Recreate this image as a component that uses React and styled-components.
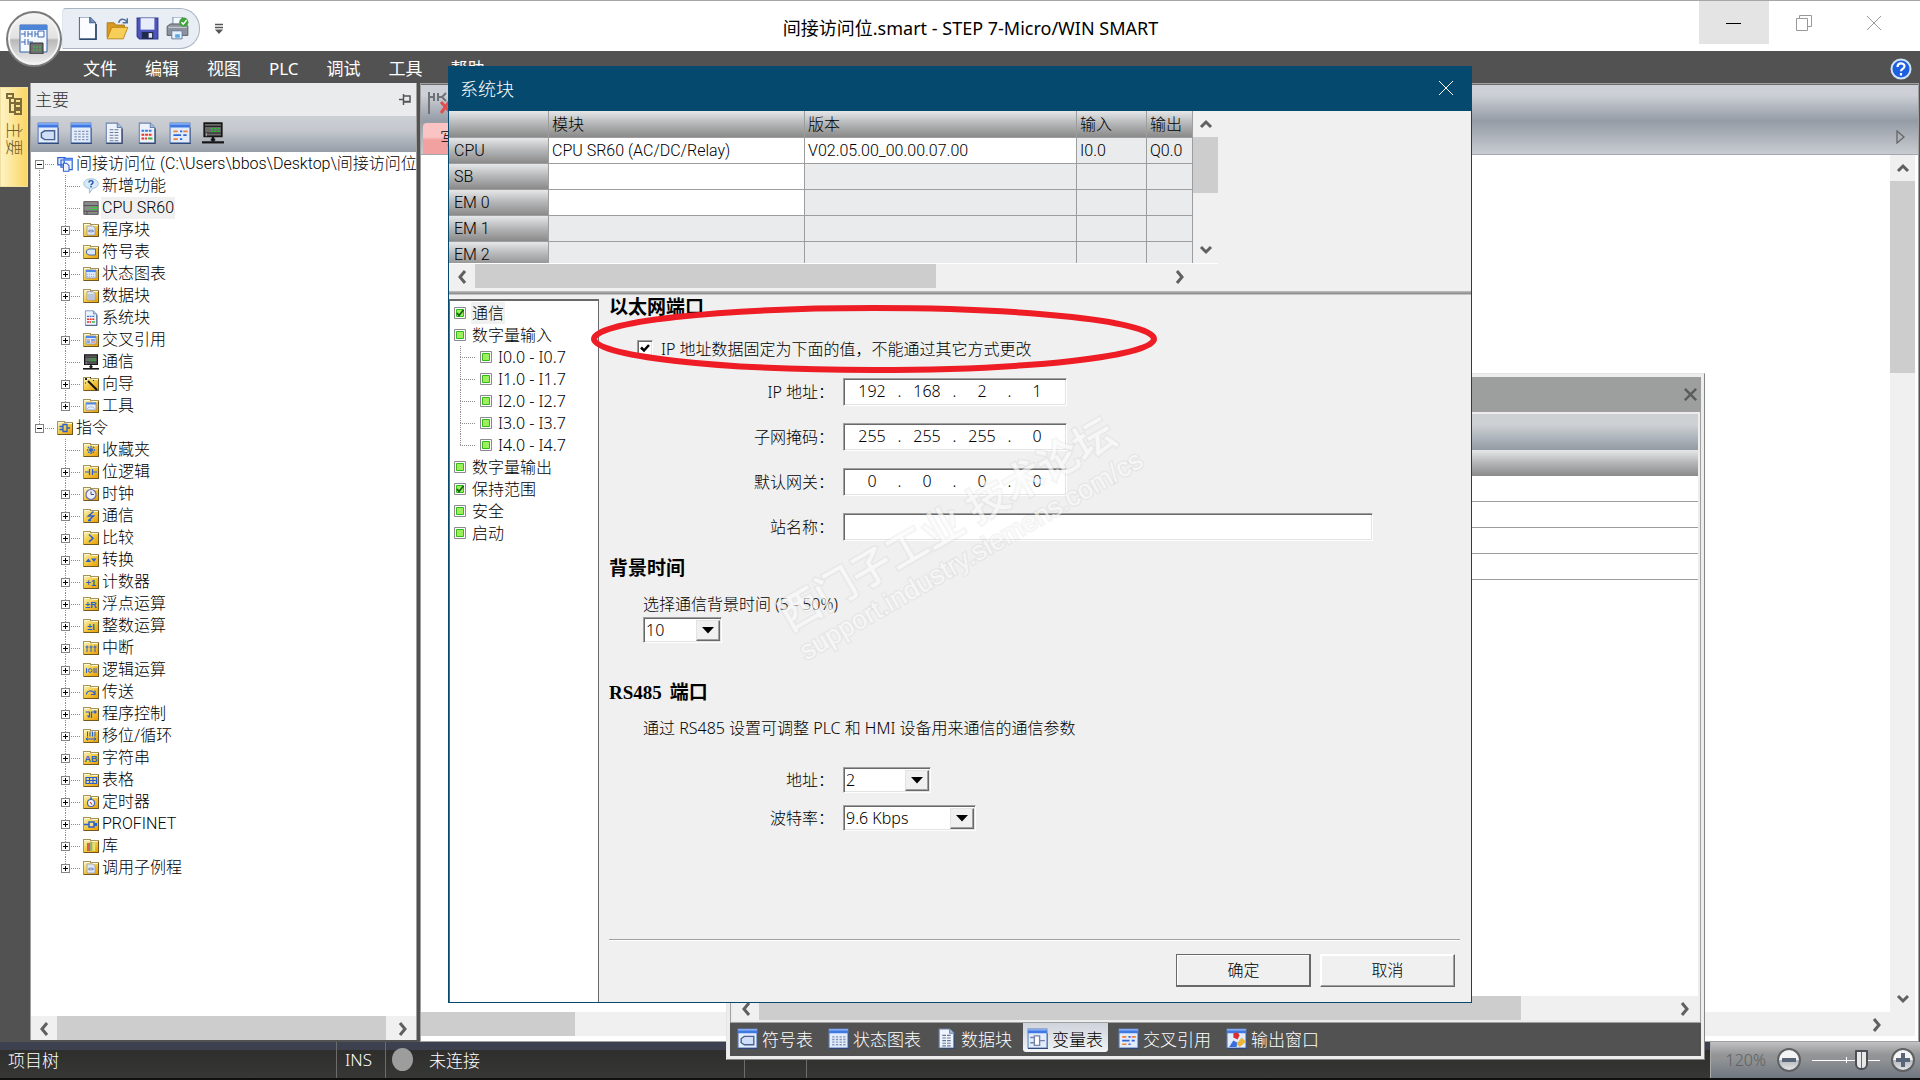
import React, { useState } from "react";
import styled, { createGlobalStyle, css } from "styled-components";

const projectItems = [
    { text: "新增功能", icon: "help", leaf: true },
    { text: "CPU SR60", icon: "cpu", leaf: true, active: true },
    { text: "程序块", icon: "f-program" },
    { text: "符号表", icon: "f-tag" },
    { text: "状态图表", icon: "f-chart" },
    { text: "数据块", icon: "f-data" },
    { text: "系统块", icon: "docColor", leaf: true },
    { text: "交叉引用", icon: "f-cross" },
    { text: "通信", icon: "plc", leaf: true },
    { text: "向导", icon: "f-wand" },
    { text: "工具", icon: "f-tools" },
];

const instructionItems = [
    { text: "收藏夹", icon: "f-star", leaf: true },
    { text: "位逻辑", icon: "f-contact" },
    { text: "时钟", icon: "f-clock" },
    { text: "通信", icon: "f-bolt" },
    { text: "比较", icon: "f-compare" },
    { text: "转换", icon: "f-convert" },
    { text: "计数器", icon: "f-counter" },
    { text: "浮点运算", icon: "f-real" },
    { text: "整数运算", icon: "f-int" },
    { text: "中断", icon: "f-interrupt" },
    { text: "逻辑运算", icon: "f-logic" },
    { text: "传送", icon: "f-move" },
    { text: "程序控制", icon: "f-control" },
    { text: "移位/循环", icon: "f-shift" },
    { text: "字符串", icon: "f-string" },
    { text: "表格", icon: "f-table" },
    { text: "定时器", icon: "f-timer" },
    { text: "PROFINET", icon: "f-profinet" },
    { text: "库", icon: "f-library" },
    { text: "调用子例程", icon: "f-program" },
];

const blockItems = [
    { text: "通信", checked: true, active: true },
    { text: "数字量输入" },
    { text: "I0.0 - I0.7", child: true },
    { text: "I1.0 - I1.7", child: true },
    { text: "I2.0 - I2.7", child: true },
    { text: "I3.0 - I3.7", child: true },
    { text: "I4.0 - I4.7", child: true, last: true },
    { text: "数字量输出" },
    { text: "保持范围", checked: true },
    { text: "安全" },
    { text: "启动" },
];

const modules = [
    { slot: "CPU", module: "CPU SR60 (AC/DC/Relay)", version: "V02.05.00_00.00.07.00", input: "I0.0", output: "Q0.0" },
    { slot: "SB", module: "" },
    { slot: "EM 0", module: "" },
    { slot: "EM 1" },
    { slot: "EM 2" },
];

const addresses = [
    { id: "ip", label: "IP 地址：", value: ["192", "168", "2", "1"] },
    { id: "mask", label: "子网掩码：", value: ["255", "255", "255", "0"] },
    { id: "gateway", label: "默认网关：", value: ["0", "0", "0", "0"] },
];

const dockTabs = [
    { text: "符号表", icon: "tag" },
    { text: "状态图表", icon: "grid" },
    { text: "数据块", icon: "doc" },
    { text: "变量表", icon: "variable", active: true },
    { text: "交叉引用", icon: "cross" },
    { text: "输出窗口", icon: "output" },
];

/* ---------- icons ---------- */

const BLUE = "#2a5fd0";

const folderMarks = {
    "f-program": (
        <>
            <path d="M4 4h6l2 2v7H4z" fill="#dfe7f6" stroke="#8a93b0" strokeWidth=".7" />
            <path d="M5 9h2M7 7.500v3M9 7.500v3M9 9h2" stroke="#6d7da8" />
        </>
    ),
    "f-tag": <path d="M6 5h6.500v6H6L3.500 9.500v-3z" fill="#dce8fb" stroke="#4a6cb0" />,
    "f-chart": (
        <>
            <path d="M3 4h10v8H3z" fill="#dce8fb" stroke="#7f93bf" strokeWidth=".8" />
            <path d="M3 4h10v2H3z" fill="#4f86e8" />
            <path d="M4 8.500h8M4 10.500h8" stroke="#a4b8dd" strokeDasharray="1 1" />
        </>
    ),
    "f-data": (
        <>
            <path d="M4 3.500h6l2 2V12H4z" fill="#dce2ec" stroke="#8a93b0" strokeWidth=".7" />
            <path d="M6 6v5M8 6v5M10 6v5" stroke="#9aa8c4" />
        </>
    ),
    "f-cross": (
        <>
            <path d="M3 4h10v8H3z" fill="#dce8fb" stroke="#7f93bf" strokeWidth=".8" />
            <path d="M3 4h10v2H3z" fill="#4f86e8" />
            <path d="M4 8h3M8 10h4" stroke="#f07030" />
            <path d="M8 8h4M4 10h3" stroke={BLUE} />
        </>
    ),
    "f-wand": (
        <>
            <path d="M5 5l9 9" stroke="#111" strokeWidth="2" />
            <path d="M2 2l2 2M4 2L2 4M7 1l1 1M10 4l1 1M11 4l-1 1M2 7h1" stroke="#222" />
        </>
    ),
    "f-tools": (
        <>
            <path d="M3 5h10v7H3z" fill="#e7effc" stroke="#7f93bf" strokeWidth=".8" />
            <path d="M3 4.500h10v2H3z" fill="#4f86e8" />
            <path d="M3 12l3-3h4l3 3" stroke="#b3bfd8" fill="none" />
        </>
    ),
    "f-root": <path d="M2.500 6.500H6M2.500 9.500H6M6 4.500h4v7H6zM10 8h3" stroke={BLUE} strokeWidth="1.300" fill="none" />,
    "f-star": <path d="M8 4v8M4 8h8M5 5l6 6M11 5l-6 6" stroke={BLUE} strokeWidth="1.500" strokeDasharray="1.500 .7" />,
    "f-contact": <path d="M2 8h4.500M9.500 8H14M6.500 5v6M9.500 5v6" stroke={BLUE} strokeWidth="1.200" />,
    "f-clock": (
        <>
            <circle cx="8" cy="8.500" r="5" fill="#eef0fb" stroke="#6a6fae" strokeWidth="1.200" />
            <path d="M8 5.500v3h3" stroke="#444a80" fill="none" />
        </>
    ),
    "f-bolt": <path d="M10.500 3.500l-5 4.500h5l-5 4.500M5 12.500h3" stroke={BLUE} strokeWidth="1.500" fill="none" />,
    "f-compare": <path d="M6 4.500l4 3.700-4 3.700" stroke={BLUE} strokeWidth="1.500" fill="none" />,
    "f-convert": <path d="M2.500 10L5.500 6.500 8 10zM8 6.500h5.500L11 10z" fill={BLUE} />,
    "f-interrupt": <path d="M4 12V5.500M8 12V5.500M12 12V5.500M2.500 7h3M6.500 7h3M10.500 7h3" stroke={BLUE} />,
    "f-logic": (
        <>
            <path d="M3.500 6v5M11 6v5M13 6v5" stroke={BLUE} />
            <circle cx="7.200" cy="8.500" r="1.800" stroke={BLUE} fill="none" />
        </>
    ),
    "f-move": <path d="M3.500 10.500c0-4 6-5 8-1M12 6.500v4H8" stroke={BLUE} strokeWidth="1.200" fill="none" />,
    "f-control": <path d="M2.500 6h4v5M4.500 9.500l2 2M8.500 12V6H13M11.500 4.500L13 6l-1.500 1.500" stroke={BLUE} strokeWidth="1.200" fill="none" />,
    "f-shift": <path d="M4.500 3.500v5M7 3.500v5M9.500 3.500v5M12 3.500v5M3 11h10M5 9.500L3 11l2 1.500M11 9.500l2 1.500-2 1.500" stroke={BLUE} fill="none" />,
    "f-table": <path d="M3 5.500h10.500v6H3zM3 8.500h10.500M6.500 5.500v6M10 5.500v6" stroke={BLUE} strokeWidth="1.200" fill="#e9d98c" />,
    "f-timer": (
        <>
            <circle cx="8" cy="9" r="3.500" fill="#fff" stroke="#3f66c8" strokeWidth="1.200" />
            <path d="M8 3.500v2" stroke="#3f66c8" strokeWidth="2" />
            <path d="M7 8l2 2.500" stroke="#e02020" strokeWidth="1.200" />
        </>
    ),
    "f-profinet": (
        <>
            <path d="M1 8.500h5M6 6h5v5H6z" stroke={BLUE} strokeWidth="1.500" fill="#f6e08a" />
            <path d="M11 7h3v3h-3z" fill={BLUE} />
        </>
    ),
    "f-library": (
        <>
            <path d="M4 5h3v8H4z" fill="#d8604e" />
            <path d="M7 4h2.500v9H7z" fill="#8fb47c" />
            <path d="M9.500 5H12v8H9.500z" fill="#e7e36c" />
        </>
    ),
};

const folderLetters = {
    "f-counter": "+1",
    "f-real": "±R",
    "f-int": "±I",
    "f-string": "AB",
};

const FolderIcon = ({ kind }) => (
    <svg width="16" height="16" viewBox="0 0 16 16" aria-hidden="true">
        <defs>
            <linearGradient id="folder" x1="0" y1="0" x2="1" y2="1">
                <stop offset="0" stopColor="#fbf0b4" />
                <stop offset=".4" stopColor="#f3d050" />
                <stop offset="1" stopColor="#ec9d04" />
            </linearGradient>
        </defs>
        <path d="M0 1h8v1h8v13H0z" fill="#a8935a" />
        <path d="M1 3h14v11H1z" fill="url(#folder)" />
        <path d="M1 2h6v1H1zM9 3h6v1H9z" fill="#fdf7d2" />
        <path d="M15 3h1v12H1v-1h14z" fill="#70581e" />
        {folderMarks[kind]}
        {folderLetters[kind] && (
            <text x="8" y="12" fontSize="9" textAnchor="middle" fill={BLUE} fontFamily="Liberation Sans, sans-serif" fontWeight="bold">
                {folderLetters[kind]}
            </text>
        )}
    </svg>
);

const windowBase = (
    <>
        <path d="M1 1h18v18H1z" fill="#e3ecfb" stroke="#5f7fb8" />
        <path d="M1 1h18v4H1z" fill="#3f78e0" />
        <path d="M1 1h18v1.500H1z" fill="#86aef5" />
        <path d="M1 19.500h19V5" stroke="#2f4a78" fill="none" />
    </>
);

const docBase = (
    <>
        <path d="M3 1h10l4 4v14H3z" fill="#eef3fb" stroke="#6b83ad" />
        <path d="M13 1v4h4" fill="#a9bfe2" stroke="#6b83ad" />
        <path d="M3 19.500h14.500V6" stroke="#38496b" fill="none" />
    </>
);

const drawings = {
    tag: (
        <>
            {windowBase}
            <path d="M7 8h9v8H7l-3-2v-4z" fill="#cfdff8" stroke="#4a6090" strokeWidth="1.300" />
        </>
    ),
    grid: (
        <>
            {windowBase}
            <path d="M4 8.500h13M4 11h13M4 13.500h13M4 16h13" stroke="#8494b8" strokeWidth="1.300" strokeDasharray="2.200 1.300" />
        </>
    ),
    doc: (
        <>
            {docBase}
            <path d="M6 7h8M6 9.500h8M6 12h8M6 14.500h8M6 17h8" stroke="#66779c" strokeDasharray="3.500 1" />
        </>
    ),
    docColor: (
        <>
            {docBase}
            <path d="M5 8h10" stroke="#3c78e0" strokeWidth="1.800" strokeDasharray="2.500 .8" />
            <path d="M5 11.500h10M5 15h5" stroke="#e83020" strokeWidth="1.800" strokeDasharray="2.500 .8" />
            <path d="M11 15h4" stroke="#38b040" strokeWidth="1.800" />
        </>
    ),
    cross: (
        <>
            {windowBase}
            <path d="M4 8.500h4M13 8.500h4M4 15.500h4" stroke="#f08038" strokeWidth="1.600" />
            <path d="M10 8.500h2M4 12h7M13 12h3M10 15.500h2" stroke="#3565d0" strokeWidth="1.600" />
        </>
    ),
    variable: (
        <>
            {windowBase}
            <path d="M3 9h4M3 14h4M7 7.500h5v9H7zM12 12h5" fill="#fff" stroke="#7384a8" strokeWidth="1.300" />
        </>
    ),
    output: (
        <>
            {windowBase}
            <path d="M7 5l4-1 2 3-2 4-4-2z" fill="#d83030" />
            <path d="M3 18l4-6 4 2-1 4z" fill="#3a6ee0" />
            <path d="M10 15l5-6 4 4-6 5z" fill="#edb53c" />
        </>
    ),
    plc: (
        <>
            <path d="M2 1h16v12H2z" fill="#6a6a6a" stroke="#161616" strokeWidth="1.500" />
            <path d="M2 4h16M2 10h16" stroke="#242424" />
            <path d="M8 6h9M8 8.500h9" stroke="#22c030" strokeDasharray="2 1" />
            <path d="M4 10v3" stroke="#9a9a9a" />
            <path d="M10 13v5M8 16h4" stroke="#161616" strokeWidth="2" />
            <path d="M0 18.500h20" stroke="#161616" strokeWidth="2" />
        </>
    ),
    cpu: (
        <>
            <path d="M1 2h18v16H1z" fill="#8b8b8b" stroke="#414141" />
            <path d="M1 7h18M1 14h18M5 14v4" stroke="#414141" />
            <path d="M7 9.500h11M7 12h11" stroke="#20d428" strokeWidth="1.300" strokeDasharray="2 1" />
        </>
    ),
    help: (
        <>
            <path d="M10 1c6 0 9 3 9 6s-3 6-7 6l-4 6v-6c-4 0-7-3-7-6s3-6 9-6z" fill="#d8ebf8" stroke="#8fb4cc" />
            <path d="M7.500 5.500c0-3 5-3 5 0 0 2-2.500 1.500-2.500 3.500M10 10v2" stroke="#1d4fae" strokeWidth="1.800" fill="none" />
        </>
    ),
    project: (
        <>
            <path d="M1 2h9v9H1zM5 5h9v9H5z" fill="#e6eefc" stroke="#2a5fd0" strokeWidth="1.500" />
            <path d="M9 3h10v14H9z" fill="#f2f6fe" stroke="#2a5fd0" strokeWidth="1.500" />
            <path d="M9 3h10v3H9z" fill="#5c8df0" />
            <path d="M8 9h4l3 3v7H8z" fill="#eef3fb" stroke="#2a5fd0" strokeWidth="1.300" />
        </>
    ),
    newFile: (
        <>
            <path d="M3 0h9l5 5v14H3z" fill="#fbfcff" stroke="#5a7398" />
            <path d="M12 0v5h5" fill="#7490ba" stroke="#41608e" />
            <path d="M3 19.500h14.500V6" stroke="#2f4668" fill="none" strokeWidth="1.300" />
        </>
    ),
    openFile: (
        <>
            <path d="M1 5h6l2 2h7v3H5L2 18H1z" fill="#d89a20" stroke="#a87818" strokeWidth=".8" />
            <path d="M5 9h14l-4 10H1z" fill="#f7cf58" stroke="#b98414" strokeWidth=".8" />
            <path d="M11 5c1-4 5-4 7-1M18.500 1v4h-4" stroke="#50709c" strokeWidth="1.300" fill="none" />
        </>
    ),
    save: (
        <>
            <path d="M1 1h18v18H3l-2-2z" fill="#4d55bc" stroke="#30388c" />
            <path d="M4 1h12v10H4z" fill="#e8edfa" />
            <path d="M5 13h10v6H5z" fill="#20294e" />
            <path d="M11 14h3v4h-3z" fill="#dfe6f6" />
        </>
    ),
    print: (
        <>
            <path d="M6 0h8l2 3v5H6z" fill="#f4f8ff" stroke="#6f86a8" strokeWidth=".8" />
            <path d="M1 8l3-2h13l2 2v8H1z" fill="#8d929c" stroke="#565c68" strokeWidth=".8" />
            <path d="M2 9h16" stroke="#c8ccd4" />
            <path d="M5 12h9v7H5z" fill="#e5f0fc" stroke="#5f7896" strokeWidth=".8" />
            <path d="M8 15h4v3H8z" fill="#58a8e4" />
            <circle cx="15.500" cy="4.500" r="4" fill="#3fa53a" />
            <path d="M13.500 4.500l1.500 1.700 3-3.500" stroke="#fff" strokeWidth="1.300" fill="none" />
        </>
    ),
};

const Icon = ({ kind, size = 20 }) => {
    if (kind.startsWith("f-")) return <FolderIcon kind={kind} />;
    return (
        <svg width={size} height={size} viewBox="0 0 20 20" fill="none" aria-hidden="true">
            {drawings[kind]}
        </svg>
    );
};

const StateIcon = ({ checked }) => (
    <svg width="12" height="12" viewBox="0 0 12 12" aria-hidden="true">
        <path d="M.5.5h11v11H.5z" fill="#fff" stroke="#8a8a8a" />
        <path d="M2.500 2.500h7v7h-7z" fill="#9cf05c" stroke="#35b81c" />
        {checked && <path d="M3 6l2 2.500L9.500 3" stroke="#0b5a12" strokeWidth="1.600" fill="none" />}
    </svg>
);

const arrows = {
    left: "M11 2L6 8l5 6",
    right: "M5 2l5 6-5 6",
    up: "M3 11l5-5 5 5",
    down: "M3 5l5 5 5-5",
};

const CrossIcon = ({ size = 16, width = 1 }) => (
    <svg width={size} height={size} viewBox="0 0 16 16" fill="none" stroke="currentColor" strokeWidth={width} aria-hidden="true">
        <path d="M1 1l14 14M15 1L1 15" />
    </svg>
);

/* ---------- shared parts ---------- */

const ScrollBar = ({ vertical, before = 0, thumb, after, noStart, label }) => (
    <ScrollBox $vertical={vertical} role="group" aria-label={label}>
        {!noStart && <ArrowButton dir={vertical ? "up" : "left"} />}
        <Track $vertical={vertical}>
            <TrackPart $grow={before} />
            <TrackPart $grow={thumb} $thumb />
            <TrackPart $grow={after} />
        </Track>
        <ArrowButton dir={vertical ? "down" : "right"} />
    </ScrollBox>
);

const ArrowButton = ({ dir }) => (
    <ScrollArrow type="button" aria-label={dir}>
        <svg width="16" height="16" viewBox="0 0 16 16" fill="none" stroke="#606060" strokeWidth="3">
            <path d={arrows[dir]} />
        </svg>
    </ScrollArrow>
);

const TreeRow = ({ item, root, open, up, down, guide }) => (
    <Row>
        {!root && <Guide $up={guide} $down={guide} />}
        <Guide $up={up} $down={down} $across>
            {!item.leaf && (
                <Expander type="button" aria-label={item.text}>
                    <svg width="9" height="9" viewBox="0 0 9 9" stroke="#000">
                        <path d={open ? "M2 4.500h5" : "M2 4.500h5M4.500 2v5"} />
                    </svg>
                </Expander>
            )}
        </Guide>
        <Icon kind={item.icon} size={16} />
        <RowText $active={item.active}>{item.text}</RowText>
    </Row>
);

/* ---------- page sections ---------- */

const TitleBar = () => (
    <TopBar>
        <AppButton type="button" aria-label="STEP 7">
            <svg width="30" height="30" viewBox="0 0 30 30" fill="none">
                <path d="M1 1h27v27H1z" fill="#f4f8ff" stroke="#3a62a8" />
                <path d="M1 1h27v5H1z" fill="#4c84d8" />
                <path d="M2 10h4M6 7v6M9 7v6M9 10h4M13 7v6M16 7v6M16 10h3M19 7h6v6h-6zM2 18h4M6 15v6M9 15v6M9 18h5" stroke="#3a66b4" />
                <path d="M11 19h13v11H11z" fill="#707070" stroke="#333" />
                <path d="M14 23h9M14 26h9" stroke="#30c840" strokeDasharray="2 1" />
            </svg>
        </AppButton>
        <QuickAccess>
            {["newFile", "openFile", "save", "print"].map((kind) => (
                <IconButton type="button" key={kind} aria-label={kind}>
                    <Icon kind={kind} size={23} />
                </IconButton>
            ))}
        </QuickAccess>
        <CustomizeButton type="button" aria-label="customize">
            <svg width="10" height="12" viewBox="0 0 10 12">
                <path d="M1 1.500h8M1 4.500h8" stroke="#555" strokeWidth="1.500" />
                <path d="M1 6.500h8L5 11z" fill="#555" />
            </svg>
        </CustomizeButton>
        <AppTitle>间接访问位.smart - STEP 7-Micro/WIN SMART</AppTitle>
        <WindowControls>
            <WindowButton type="button" aria-label="minimize" $active>
                <svg width="16" height="16" stroke="#000">
                    <path d="M0 8.500h15" />
                </svg>
            </WindowButton>
            <WindowButton type="button" aria-label="restore">
                <svg width="16" height="16" stroke="#999" fill="none">
                    <path d="M.5 3.500h11v12H.5zM3.500 3.500v-3h12v11h-4" />
                </svg>
            </WindowButton>
            <WindowButton type="button" aria-label="close">
                <CrossIcon />
            </WindowButton>
        </WindowControls>
    </TopBar>
);

const ProjectPanel = () => (
    <Panel>
        <PanelTitle>
            主要
            <svg width="14" height="14" viewBox="0 0 14 14" fill="none" stroke="#555" aria-hidden="true">
                <path d="M1 7.500h4M5.500 2v11" strokeWidth="1.500" />
                <path d="M6 4h6v6H6M6 9.500h6" strokeWidth="1.500" />
            </svg>
        </PanelTitle>
        <PanelTools>
            {["tag", "grid", "doc", "docColor", "cross", "plc"].map((kind) => (
                <IconButton type="button" key={kind} aria-label={kind}>
                    <Icon kind={kind} size={22} />
                </IconButton>
            ))}
        </PanelTools>
        <Tree>
            <TreeRow root open down item={{ text: "间接访问位 (C:\\Users\\bbos\\Desktop\\间接访问位", icon: "project" }} />
            {projectItems.map((item, i) => (
                <TreeRow key={item.text} item={item} guide up down={i < projectItems.length - 1} />
            ))}
            <TreeRow root open up item={{ text: "指令", icon: "f-root" }} />
            {instructionItems.map((item, i) => (
                <TreeRow key={item.text} item={item} up down={i < instructionItems.length - 1} />
            ))}
        </Tree>
        <ScrollBar label="tree" thumb={328} after={4} />
    </Panel>
);

const Editor = () => (
    <EditorArea>
        <EditorTools>
            <svg width="28" height="28" viewBox="0 0 28 28" fill="none" aria-hidden="true">
                <path d="M2 2v22M2 7h5M7 3v8M11 3v8M11 7h4M19 3l-4 4 4 4" stroke="#6f7278" strokeWidth="2" />
                <path d="M14 12l9 10M22 12l-8 11" stroke="#e05050" strokeWidth="3" />
            </svg>
            <EditorTab>写</EditorTab>
            <EditorNext type="button" aria-label="next">
                <svg width="10" height="14" viewBox="0 0 10 14" fill="none" stroke="#666">
                    <path d="M1 1v12l7-6z" strokeWidth="1.300" />
                </svg>
            </EditorNext>
        </EditorTools>
        <EditorBody>
            <EditorCanvas />
            <ScrollBar vertical label="editor vertical" thumb={192} after={612} />
        </EditorBody>
        <EditorFoot>
            <ScrollBar noStart label="editor horizontal" thumb={154} after={1289} />
        </EditorFoot>
    </EditorArea>
);

const VariableWindow = () => (
    <FloatWindow>
        <FloatTitle>
            <CrossIcon size={13} width={3} />
        </FloatTitle>
        <FloatBody>
            <FloatTools />
            <FloatHeader />
            <FloatLine />
            <FloatLine />
            <FloatLine />
            <FloatLine />
            <FloatFill />
            <ScrollBar label="variables" thumb={761} after={151} />
        </FloatBody>
        <Dock>
            {dockTabs.map(({ text, icon, active }) => (
                <DockTab type="button" key={text} $active={active}>
                    <Icon kind={icon} size={21} />
                    {text}
                </DockTab>
            ))}
        </Dock>
    </FloatWindow>
);

const SelectBox = ({ id, value, width }) => (
    <Combo $width={width}>
        <ComboSelect id={id} defaultValue={value}>
            <option>{value}</option>
        </ComboSelect>
        <ComboArrow>
            <svg width="12" height="7" viewBox="0 0 12 7">
                <path d="M0 0h12L6 6.500z" />
            </svg>
        </ComboArrow>
    </Combo>
);

const ModuleTable = () => (
    <ModuleArea>
        <ModuleTop>
            <ModuleClip>
                <Modules>
                    <colgroup>
                        <col width="100" />
                        <col width="256" />
                        <col width="272" />
                        <col width="70" />
                        <col />
                    </colgroup>
                    <thead>
                        <tr>
                            <th aria-label="slot" />
                            <th>模块</th>
                            <th>版本</th>
                            <th>输入</th>
                            <th>输出</th>
                        </tr>
                    </thead>
                    <tbody>
                        {modules.map((m) => (
                            <tr key={m.slot}>
                                <th>{m.slot}</th>
                                <Cell $open={m.module !== undefined}>{m.module}</Cell>
                                <Cell $open={m.version}>{m.version}</Cell>
                                <Cell>{m.input}</Cell>
                                <Cell>{m.output}</Cell>
                            </tr>
                        ))}
                    </tbody>
                </Modules>
            </ModuleClip>
            <ScrollBar vertical label="modules vertical" thumb={56} after={44} />
        </ModuleTop>
        <ModuleBottom>
            <ScrollBar label="modules horizontal" thumb={461} after={231} />
        </ModuleBottom>
    </ModuleArea>
);

const SystemBlockDialog = () => {
    const [locked, setLocked] = useState(true);
    const [name, setName] = useState("");

    return (
        <Dialog role="dialog" aria-label="系统块">
            <DialogTitle>
                系统块
                <IconButton type="button" aria-label="close dialog">
                    <CrossIcon />
                </IconButton>
            </DialogTitle>
            <ModuleTable />
            <Splitter />
            <DialogBody>
                <BlockTree>
                    {blockItems.map(({ text, checked, active, child, last }) => (
                        <Row key={text}>
                            {child && <BlockGuide $up $down={!last} $across />}
                            <StateIcon checked={checked} />
                            <RowText $active={active}>{text}</RowText>
                        </Row>
                    ))}
                </BlockTree>
                <Form onSubmit={(e) => e.preventDefault()}>
                    <SectionTitle>以太网端口</SectionTitle>
                    <CheckRow>
                        <CheckBox type="checkbox" checked={locked} onChange={() => setLocked(!locked)} />
                        IP 地址数据固定为下面的值，不能通过其它方式更改
                    </CheckRow>
                    <Fields $gap={17} $top={18}>
                        {addresses.map(({ id, label, value }) => (
                            <React.Fragment key={id}>
                                <label htmlFor={`${id}-0`}>{label}</label>
                                <IpBox>
                                    {value.map((octet, i) => (
                                        <React.Fragment key={i}>
                                            {i > 0 && <span>.</span>}
                                            <input id={`${id}-${i}`} aria-label={`${label}${i + 1}`} defaultValue={octet} />
                                        </React.Fragment>
                                    ))}
                                </IpBox>
                            </React.Fragment>
                        ))}
                        <label htmlFor="station">站名称：</label>
                        <TextBox id="station" value={name} onChange={(e) => setName(e.target.value)} />
                    </Fields>
                    <SectionTitle $top={15}>背景时间</SectionTitle>
                    <Note htmlFor="background">选择通信背景时间 (5 - 50%)</Note>
                    <Indent>
                        <SelectBox id="background" value="10" width={79} />
                    </Indent>
                    <SectionTitle $top={37}>
                        <span>RS485</span>
                        <span>端口</span>
                    </SectionTitle>
                    <Note as="p">通过 RS485 设置可调整 PLC 和 HMI 设备用来通信的通信参数</Note>
                    <Fields $gap={12} $top={27}>
                        <label htmlFor="address">地址：</label>
                        <SelectBox id="address" value="2" width={88} />
                        <label htmlFor="baud">波特率：</label>
                        <SelectBox id="baud" value="9.6 Kbps" width={133} />
                    </Fields>
                    <Footer>
                        <PushButton type="submit" $main>
                            确定
                        </PushButton>
                        <PushButton type="button">取消</PushButton>
                    </Footer>
                </Form>
            </DialogBody>
            <Highlight viewBox="0 0 566 70" fill="none" aria-hidden="true">
                <ellipse cx="283" cy="35" rx="280" ry="31" stroke="#ee1c24" strokeWidth="6" />
            </Highlight>
            <Watermark>
                <WatermarkTitle>西门子工业 技术论坛</WatermarkTitle>
                <div>support.industry.siemens.com/cs</div>
            </Watermark>
        </Dialog>
    );
};

const StatusBar = () => (
    <Status>
        <StatusCell $width={337}>项目树</StatusCell>
        <StatusCell $width={49}>INS</StatusCell>
        <StatusCell $width={359}>
            <StatusLight />
            未连接
        </StatusCell>
        <StatusCell $width={62} />
        <ZoomArea>
            <label htmlFor="zoom">120%</label>
            <RoundButton type="button" aria-label="zoom out">
                <svg width="14" height="14" stroke="#5a6478" strokeWidth="4">
                    <path d="M0 7h14" />
                </svg>
            </RoundButton>
            <Slider id="zoom" type="range" min="0" max="100" defaultValue="78" />
            <RoundButton type="button" aria-label="zoom in">
                <svg width="14" height="14" stroke="#5a6478" strokeWidth="4">
                    <path d="M0 7h14M7 0v14" />
                </svg>
            </RoundButton>
        </ZoomArea>
    </Status>
);

const App = () => (
    <Page>
        <GlobalStyle />
        <TitleBar />
        <MenuBar>
            {["文件", "编辑", "视图", "PLC", "调试", "工具", "帮助"].map((text) => (
                <MenuItem type="button" key={text}>
                    {text}
                </MenuItem>
            ))}
            <HelpButton type="button" aria-label="help">
                <svg width="22" height="22" viewBox="0 0 22 22" fill="none">
                    <circle cx="11" cy="11" r="9.500" fill="#1c5fe0" stroke="#cfe4fb" strokeWidth="2" />
                    <path d="M7.500 9c0-5 7-4.500 7-.7 0 2.700-3.500 2.500-3.500 5M11 15v2.500" stroke="#fff" strokeWidth="2.200" />
                </svg>
            </HelpButton>
        </MenuBar>
        <Workspace>
            <SideStrip>
                <SideTab type="button">
                    <svg width="18" height="24" viewBox="0 0 18 24" fill="none" stroke="#7c6c3c" strokeWidth="2" aria-hidden="true">
                        <path d="M2 2h6v4H2zM5 6v14h4M5 11h4M10 7h6v4h-6zM10 12h6v4h-6zM10 18h6v4h-6z" />
                    </svg>
                    <SideLabel>主要</SideLabel>
                </SideTab>
            </SideStrip>
            <ProjectPanel />
            <Editor />
        </Workspace>
        <StatusBar />
        <VariableWindow />
        <SystemBlockDialog />
    </Page>
);

/* ---------- styles ---------- */

const uiFont = `"Noto Sans", "Noto Sans CJK SC", sans-serif`;
const treeFont = `Roboto, "Noto Sans CJK SC", sans-serif`;

const GlobalStyle = createGlobalStyle`
  * {
    box-sizing: border-box;
  }
  body {
    margin: 0;
    font-family: ${uiFont};
    font-size: 16px;
    font-weight: 300;
    color: #000;
    overflow: hidden;
  }
  button,
  input,
  select {
    font: inherit;
    color: inherit;
    margin: 0;
    padding: 0;
    border: 0;
    border-radius: 0;
    background: none;
  }
  svg {
    display: block;
    flex: none;
  }
`;

const sunken = css`
  background: #fff;
  border: 1px solid;
  border-color: #a0a0a0 #fff #fff #a0a0a0;
  box-shadow: inset 1px 1px 0 #696969, inset -1px -1px 0 #e3e3e3;
`;

const metal = css`
  background: linear-gradient(#e6e7e9, #b4b5b7 50%, #8a8a8a);
`;

const Page = styled.div`
  position: relative;
  height: 100vh;
  display: flex;
  flex-direction: column;
  background: #525252;
`;

const TopBar = styled.header`
  display: flex;
  align-items: center;
  height: 51px;
  flex: none;
  padding-left: 6px;
  background: #fff;
  border-top: 1px solid #a6a6a6;
`;

const AppButton = styled.button`
  position: relative;
  z-index: 1;
  display: flex;
  align-items: center;
  justify-content: center;
  align-self: flex-start;
  flex: none;
  width: 56px;
  height: 56px;
  margin-top: 10px;
  border: 2px solid #7b7b7b;
  border-radius: 50%;
  background: linear-gradient(#f4f4f4, #e2e2e2 48%, #b9b9b9 52%, #f2f2f2);
  box-shadow: inset 0 0 0 2px #f4f4f4;
`;

const QuickAccess = styled.div`
  display: flex;
  align-items: center;
  gap: 7px;
  height: 41px;
  margin: 5px 14px 0 0;
  padding: 0 10px 0 13px;
  background: #e9eef4;
  border: 1px solid #a9b4c2;
  border-left-color: #dfe5ec;
  border-radius: 4px 20px 20px 0;
`;

const IconButton = styled.button`
  display: flex;
  align-items: center;
  justify-content: center;
`;

const CustomizeButton = styled(IconButton)`
  margin-top: 5px;
`;

const AppTitle = styled.div`
  flex: 1;
  padding: 2px 0 0 18px;
  text-align: center;
  font-size: 18px;
  font-weight: 400;
  white-space: nowrap;
`;

const WindowControls = styled.div`
  display: flex;
  align-self: flex-start;
  margin-right: 11px;
`;

const WindowButton = styled.button`
  display: flex;
  align-items: center;
  justify-content: center;
  width: 70px;
  height: 43px;
  color: #999;
  background: ${({ $active }) => ($active ? "#e4e4e4" : "none")};
`;

const MenuBar = styled.nav`
  display: flex;
  align-items: center;
  gap: 28px;
  height: 32px;
  flex: none;
  padding: 3px 8px 0 83px;
  color: #fff;
`;

const MenuItem = styled.button`
  font-size: 17px;
  font-weight: 400;
  line-height: 24px;
`;

const HelpButton = styled(IconButton)`
  margin-left: auto;
`;

const Workspace = styled.main`
  display: flex;
  flex: 1;
  min-height: 0;
`;

const SideStrip = styled.aside`
  width: 30px;
  flex: none;
  padding: 4px 2px 0 0;
`;

const SideTab = styled.button`
  display: flex;
  flex-direction: column;
  align-items: center;
  gap: 6px;
  width: 28px;
  height: 100px;
  padding-top: 4px;
  background: linear-gradient(90deg, #fdf3c4, #fcd664);
  border: 1px solid #f2dfa0;
  color: #6c5c2c;
`;

const SideLabel = styled.span`
  writing-mode: vertical-rl;
  text-orientation: sideways;
  font-size: 17px;
  line-height: 20px;
`;

const Panel = styled.section`
  display: flex;
  flex-direction: column;
  width: 387px;
  flex: none;
  margin-bottom: 2px;
  border: solid #a0a0a0;
  border-width: 0 1px;
  background: #fff;
`;

const PanelTitle = styled.header`
  display: flex;
  align-items: center;
  justify-content: space-between;
  height: 33px;
  flex: none;
  padding: 0 4px 2px;
  background: #e9ebed;
  font-size: 17px;
  color: #333;
`;

const PanelTools = styled.div`
  display: flex;
  align-items: center;
  gap: 11px;
  height: 36px;
  flex: none;
  padding: 0 7px 2px 6px;
  background: linear-gradient(#cdd1d6, #c4c8ce 40%, #959da7);
`;

const Tree = styled.div`
  flex: 1;
  min-height: 0;
  padding-top: 1px;
  overflow: hidden;
  font-family: ${treeFont};
`;

const Row = styled.div`
  display: flex;
  align-items: center;
  height: 22px;
`;

const dots = "#8c8c8c 0 1px, transparent 1px 2px";

const Guide = styled.span`
  display: flex;
  align-items: center;
  flex: none;
  width: 26px;
  height: 22px;
  padding-left: 4px;
  background-repeat: no-repeat;
  background-image: repeating-linear-gradient(${({ $up }) => ($up ? dots : "transparent 0 2px")}),
    repeating-linear-gradient(${({ $down }) => ($down ? dots : "transparent 0 2px")}),
    repeating-linear-gradient(90deg, ${({ $across }) => ($across ? dots : "transparent 0 2px")});
  background-size: 1px 11px, 1px 11px, 16px 1px;
  background-position: 8px 0, 8px 11px, 8px 11px;
`;

const BlockGuide = styled(Guide)`
  background-position: 6px 0, 6px 11px, 6px 11px;
`;

const Expander = styled.button`
  display: flex;
  width: 9px;
  height: 9px;
  background: #fff;
  outline: 1px solid #848484;
  outline-offset: -1px;
`;

const RowText = styled.span`
  margin-left: 2px;
  padding: 0 1px;
  line-height: 22px;
  white-space: nowrap;
  background: ${({ $active }) => ($active ? "#f0f0f0" : "none")};
`;

const ScrollBox = styled.div`
  display: flex;
  flex: none;
  flex-direction: ${({ $vertical }) => ($vertical ? "column" : "row")};
  ${({ $vertical }) => ($vertical ? "width: 25px;" : "height: 24px;")}
  background: #f0f0f0;
`;

const ScrollArrow = styled.button`
  display: flex;
  align-items: center;
  justify-content: center;
  flex: none;
  width: 26px;
  height: 26px;
`;

const Track = styled.div`
  display: flex;
  flex: 1;
  flex-direction: ${({ $vertical }) => ($vertical ? "column" : "row")};
`;

const TrackPart = styled.div`
  flex: ${({ $grow }) => $grow} 0 0;
  background: ${({ $thumb }) => ($thumb ? "#cdcdcd" : "none")};
`;

const EditorArea = styled.section`
  display: flex;
  flex-direction: column;
  flex: 1;
  min-width: 0;
  margin: 0 1px 0 3px;
  border: 1px solid #a0a0a0;
  background: #fff;
`;

const EditorTools = styled.div`
  display: grid;
  grid-template-columns: 1fr auto;
  grid-template-rows: 38px 31px;
  align-items: center;
  flex: none;
  padding-left: 2px;
  background: linear-gradient(#cdd0d6, #cdd0d6 14%, #959ca6 52%, #c8ccd1);
  border-top: 1px solid #6c6c6c;
  border-bottom: 1px solid #a3a8ae;
  > svg {
    margin-left: 4px;
  }
`;

const EditorTab = styled.div`
  grid-row: 2;
  width: 160px;
  padding-left: 17px;
  line-height: 31px;
  background: linear-gradient(#fbc4c4 45%, #f2a0a0 55%);
  border-radius: 4px 4px 0 0;
`;

const EditorNext = styled(IconButton)`
  grid-row: 2;
  margin: 0 12px 4px 0;
`;

const EditorBody = styled.div`
  display: flex;
  flex: 1;
  min-height: 0;
  margin-right: 3px;
`;

const EditorCanvas = styled.div`
  flex: 1;
`;

const EditorFoot = styled.div`
  margin: 0 3px 5px 0;
  padding-right: 25px;
  background: #f0f0f0;
`;

const FloatWindow = styled.section`
  position: absolute;
  top: 373px;
  bottom: 20px;
  left: 726px;
  right: 215px;
  display: flex;
  flex-direction: column;
  padding: 3px;
  background: #ededed;
  border: 1px solid;
  border-color: #e6e6e6 #858585 #858585 #e6e6e6;
`;

const FloatTitle = styled.header`
  display: flex;
  align-items: center;
  justify-content: flex-end;
  height: 34px;
  flex: none;
  padding-right: 4px;
  background: #9d9f9e;
  color: #5c5c5c;
`;

const FloatBody = styled.div`
  display: flex;
  flex-direction: column;
  flex: 1;
  padding: 2px;
  border: 1px solid #a0a0a0;
`;

const FloatTools = styled.div`
  height: 36px;
  background: linear-gradient(#cdd1d4 30%, #929aa4);
`;

const FloatHeader = styled.div`
  height: 26px;
  ${metal}
`;

const FloatLine = styled.div`
  height: 26px;
  background: #fff;
  border-bottom: 1px solid #9d9d9d;
`;

const FloatFill = styled.div`
  flex: 1;
  background: #fff;
`;

const Dock = styled.div`
  display: flex;
  gap: 6px;
  height: 33px;
  flex: none;
  padding: 0 3px;
  background: #525252;
`;

const DockTab = styled.button`
  display: flex;
  align-items: center;
  gap: 4px;
  height: 29px;
  padding: 2px 5px 0 4px;
  font-size: 17px;
  border-radius: 0 0 3px 3px;
  color: ${({ $active }) => ($active ? "#000" : "#fff")};
  background: ${({ $active }) => ($active ? "linear-gradient(#cfd4db, #f2f4f6)" : "none")};
`;

const Dialog = styled.div`
  position: absolute;
  top: 66px;
  bottom: 77px;
  left: 448px;
  right: 448px;
  display: flex;
  flex-direction: column;
  background: #f0f0f0;
  border: 1px solid #054a6e;
`;

const DialogTitle = styled.header`
  display: flex;
  align-items: center;
  justify-content: space-between;
  height: 44px;
  flex: none;
  padding: 0 17px 2px 11px;
  background: #054a6e;
  color: #fff;
  font-size: 18px;
`;

const ModuleArea = styled.div`
  width: 769px;
  font-family: ${treeFont};
`;

const ModuleTop = styled.div`
  display: flex;
  height: 153px;
  border-bottom: 1px solid #fff;
`;

const ModuleClip = styled.div`
  flex: 1;
  overflow: hidden;
`;

const ModuleBottom = styled.div`
  padding-right: 25px;
`;

const Modules = styled.table`
  width: 100%;
  table-layout: fixed;
  border-spacing: 0;
  line-height: 24px;
  th,
  td {
    height: 26px;
    padding: 0 0 0 3px;
    text-align: left;
    white-space: nowrap;
    font-weight: inherit;
    border: solid #9d9d9d;
    border-width: 0 1px 1px 0;
  }
  th {
    ${metal}
  }
  thead th {
    height: 27px;
    padding-top: 2px;
  }
  tbody th {
    padding-left: 5px;
  }
`;

const Cell = styled.td`
  background: ${({ $open }) => ($open ? "#fff" : "#e9ebed")};
`;

const Splitter = styled.div`
  height: 4px;
  flex: none;
  margin-top: 3px;
  background: linear-gradient(#c4c4c4, #8c8c8c 60%, #dcdcdc);
`;

const DialogBody = styled.div`
  display: flex;
  flex: 1;
`;

const BlockTree = styled.div`
  width: 150px;
  flex: none;
  margin-top: 4px;
  padding: 1px 0 0 4px;
  background: #fff;
  border: solid #696969;
  border-width: 2px 1px 0 1px;
  svg {
    margin-right: 3px;
  }
`;

const Form = styled.form`
  display: flex;
  flex-direction: column;
  flex: 1;
  padding: 0 11px 15px 10px;
`;

const SectionTitle = styled.h3`
  display: flex;
  gap: 8px;
  margin: ${({ $top = 0 }) => $top}px 0 0;
  font-family: "Liberation Serif", "Noto Sans CJK SC", serif;
  font-size: 19px;
  line-height: 26px;
`;

const CheckRow = styled.label`
  display: flex;
  align-items: center;
  align-self: flex-start;
  gap: 8px;
  height: 24px;
  margin: 15px 0 0 28px;
`;

const CheckBox = styled.input`
  appearance: none;
  width: 16px;
  height: 16px;
  ${sunken}
  &:checked {
    background: #fff
      url("data:image/svg+xml,%3Csvg xmlns='http://www.w3.org/2000/svg' viewBox='0 0 10 10'%3E%3Cpath d='M1 4.500l3 3L9 2' fill='none' stroke='black' stroke-width='2.500'/%3E%3C/svg%3E")
      center / 10px no-repeat;
  }
`;

const Fields = styled.div`
  display: grid;
  grid-template-columns: 225px auto;
  justify-content: start;
  align-items: center;
  gap: ${({ $gap }) => $gap}px 9px;
  margin-top: ${({ $top }) => $top}px;
  label {
    text-align: right;
    line-height: 24px;
  }
`;

const IpBox = styled.div`
  display: flex;
  align-items: center;
  width: 224px;
  height: 28px;
  padding: 0 0 2px 5px;
  ${sunken}
  input {
    width: 46px;
    text-align: center;
  }
  span {
    width: 9px;
    text-align: center;
  }
`;

const TextBox = styled.input`
  width: 530px;
  height: 28px;
  padding: 0 4px;
  ${sunken}
`;

const Note = styled.label`
  margin: 10px 0 0 34px;
  line-height: 24px;
`;

const Indent = styled.div`
  margin: 1px 0 0 34px;
`;

const Combo = styled.div`
  display: grid;
  grid-template-columns: 1fr 24px;
  width: ${({ $width }) => $width}px;
  height: 26px;
  padding: 1px;
  ${sunken}
`;

const ComboSelect = styled.select`
  grid-area: 1 / 1 / 2 / 3;
  appearance: none;
  padding-left: 1px;
  line-height: 22px;
`;

const ComboArrow = styled.span`
  grid-area: 1 / 2;
  display: flex;
  align-items: center;
  justify-content: center;
  margin-top: 1px;
  pointer-events: none;
  background: #f0f0f0;
  border: 1px solid;
  border-color: #e3e3e3 #696969 #696969 #e3e3e3;
  box-shadow: inset -1px -1px 0 #a0a0a0;
`;

const Footer = styled.footer`
  display: flex;
  justify-content: flex-end;
  gap: 9px;
  margin-top: auto;
  padding: 14px 5px 0 0;
  border-top: 1px solid #a0a0a0;
  box-shadow: inset 0 1px 0 #fff;
`;

const PushButton = styled.button`
  width: 135px;
  height: 33px;
  padding-bottom: 3px;
  border: 1px solid;
  border-color: ${({ $main }) => ($main ? "#696969" : "#fff #696969 #696969 #fff")};
  box-shadow: inset -1px -1px 0 ${({ $main }) => ($main ? "#696969" : "#a0a0a0")}, inset 1px 1px 0 #fff;
`;

const Highlight = styled.svg`
  position: absolute;
  top: 237px;
  left: 142px;
  width: 566px;
  height: 70px;
  pointer-events: none;
`;

const Watermark = styled.div`
  position: absolute;
  top: 423px;
  left: 313px;
  width: 420px;
  transform: rotate(-30deg);
  pointer-events: none;
  white-space: nowrap;
  font-family: "Liberation Sans", "Noto Sans CJK SC", sans-serif;
  font-size: 27px;
  font-weight: 500;
  line-height: 30px;
  color: rgba(255, 255, 255, 0.65);
  -webkit-text-stroke: 3px rgba(170, 170, 170, 0.14);
  paint-order: stroke fill;
`;

const WatermarkTitle = styled.div`
  font-size: 41px;
  line-height: 46px;
`;

const Status = styled.footer`
  display: flex;
  height: 38px;
  flex: none;
  color: #fff;
  background: linear-gradient(#3d404e 8px, #2e2e2d 8px, #373736);
  border-bottom: 2px solid #101010;
`;

const StatusCell = styled.div`
  display: flex;
  align-items: center;
  gap: 16px;
  width: ${({ $width }) => $width}px;
  padding: 0 0 2px 8px;
  font-size: 17px;
  border-right: 1px solid #6c6c6c;
`;

const StatusLight = styled.span`
  width: 21px;
  height: 23px;
  margin-left: -2px;
  border-radius: 50%;
  background: #9d9d9d;
`;

const ZoomArea = styled.div`
  display: flex;
  align-items: center;
  gap: 11px;
  margin-left: auto;
  padding: 0 5px 0 15px;
  background: linear-gradient(#c2c0c2, #949596 35%, #8f9294 50%, #6f7681);
  border-left: 1px solid #aaa;
  color: #606060;
`;

const RoundButton = styled(IconButton)`
  width: 24px;
  height: 24px;
  border: 2px solid #5e6064;
  border-radius: 50%;
  background: linear-gradient(#f4f4f4 50%, #b4b8bc 50%, #e4e4e4);
`;

const Slider = styled.input`
  appearance: none;
  width: 68px;
  height: 20px;
  background: linear-gradient(#fff, #fff) center / 100% 1px no-repeat,
    linear-gradient(#fff, #fff) center / 1px 6px no-repeat;
  &::-webkit-slider-thumb {
    appearance: none;
    width: 13px;
    height: 20px;
    border: 2px solid #4c4f54;
    border-radius: 1px 1px 6px 6px;
    background: linear-gradient(90deg, #e8e8e8 40%, #666 40%, #666 60%, #e8e8e8 60%);
  }
`;

export default App;
